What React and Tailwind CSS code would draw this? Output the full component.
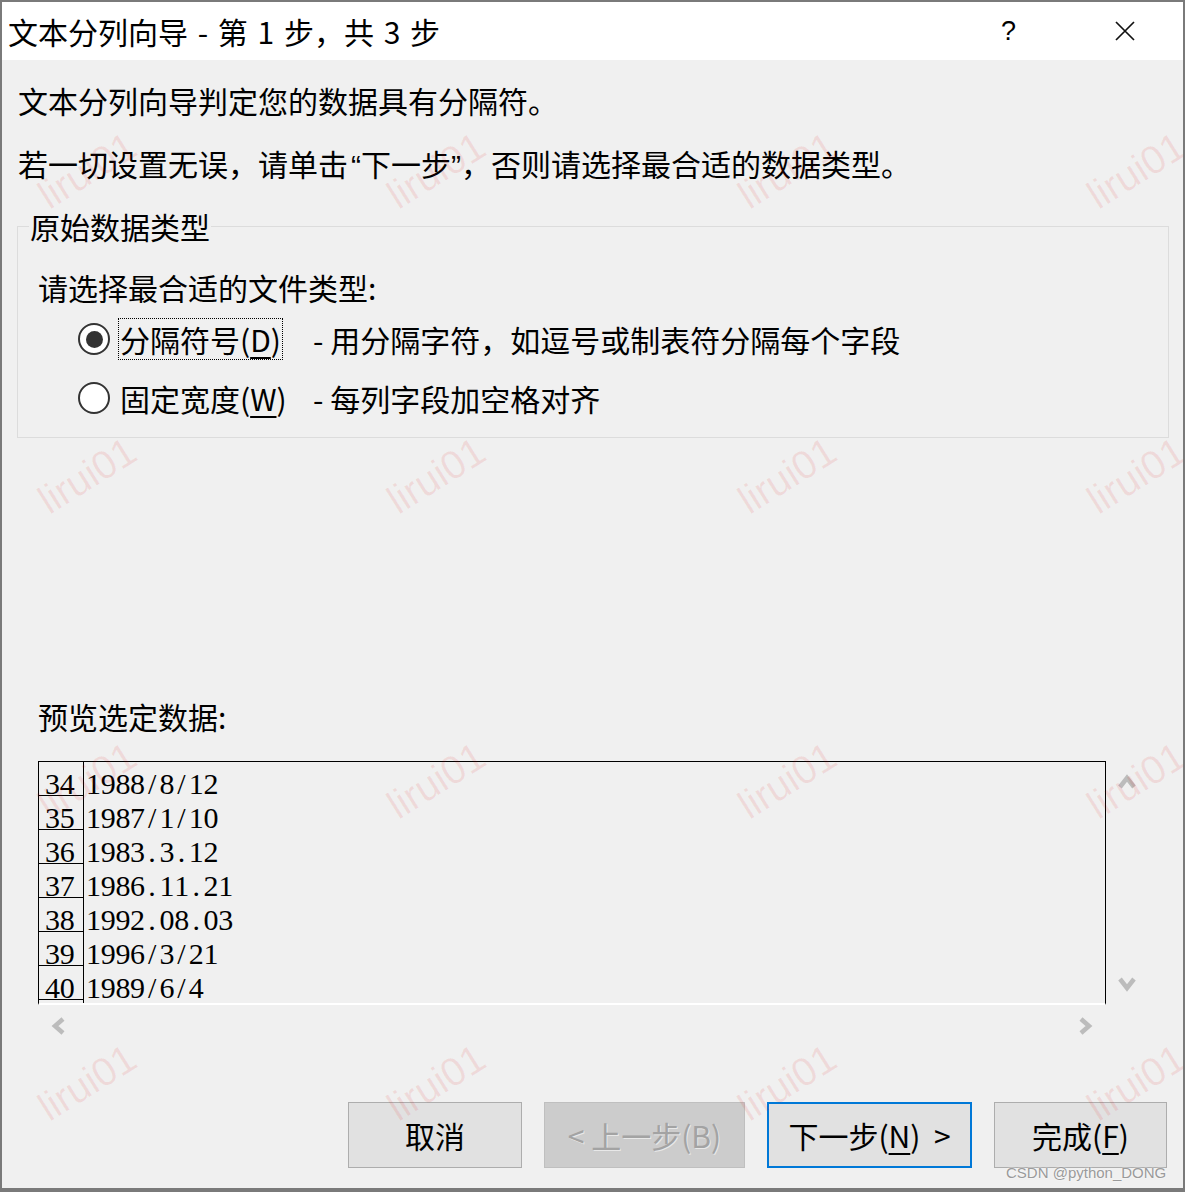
import React from 'react';

const rows = [
  ['34', '1988/8/12'],
  ['35', '1987/1/10'],
  ['36', '1983.3.12'],
  ['37', '1986.11.21'],
  ['38', '1992.08.03'],
  ['39', '1996/3/21'],
  ['40', '1989/6/4'],
  ['41', ''],
];

const marks = [
  'left-[85px] top-[168px]',
  'left-[434px] top-[168px]',
  'left-[785px] top-[168px]',
  'left-[1134px] top-[168px]',
  'left-[85px] top-[473px]',
  'left-[434px] top-[473px]',
  'left-[785px] top-[473px]',
  'left-[1134px] top-[473px]',
  'left-[85px] top-[778px]',
  'left-[434px] top-[778px]',
  'left-[785px] top-[778px]',
  'left-[1134px] top-[778px]',
  'left-[85px] top-[1080px]',
  'left-[434px] top-[1080px]',
  'left-[785px] top-[1080px]',
  'left-[1134px] top-[1080px]',
];

function Mono({ text }) {
  // half-width cells like SimSun
  return (
    <span className="inline-flex">
      {text.split('').map((c, i) => (
        <span key={i} className="inline-block w-[14.7px] text-center">
          {c}
        </span>
      ))}
    </span>
  );
}

function Chevron({ dir }) {
  const pts = {
    up: '2,14 9,5 16,14',
    down: '2,3 9,12 16,3',
    left: '13,2 5,9 13,16',
    right: '3,2 11,9 3,16',
  }[dir];
  const vertical = dir === 'up' || dir === 'down';
  return (
    <svg width={vertical ? 18 : 16} height={vertical ? 16 : 18} viewBox={vertical ? '0 0 18 16' : '0 0 16 18'}>
      <polyline points={pts} fill="none" stroke="#bcbcbc" strokeWidth="4.5" />
    </svg>
  );
}

function Radio({ checked }) {
  return (
    <div className="w-[32px] h-[32px] rounded-full border-[2.5px] border-[#333] bg-white flex items-center justify-center shrink-0">
      {checked && <div className="w-[17px] h-[17px] rounded-full bg-[#333]" />}
    </div>
  );
}

function Key({ children }) {
  return <span className="underline decoration-[2px] underline-offset-[5px]">{children}</span>;
}

export default function App() {
  return (
    <div className="relative w-[1185px] h-[1192px] overflow-hidden border-t-[2px] border-l-[2px] border-r-[2px] border-b-[4px] border-[#7a7a7a] bg-[#f0f0f0] text-black font-['Noto_Sans_CJK_SC',sans-serif]">
      {/* Title bar */}
      <div className="h-[58px] bg-white flex items-center pl-[6px] pr-[48px]">
        <span className="text-[30px] leading-[40px] [word-spacing:3px]">文本分列向导 - 第 1 步，共 3 步</span>
        <span className="ml-auto text-[27px] leading-[40px] font-['Liberation_Sans',sans-serif]">?</span>
        <svg className="ml-[99px]" width="20" height="20" viewBox="0 0 20 20">
          <path d="M1 1 L19 19 M19 1 L1 19" stroke="#111" strokeWidth="1.7" />
        </svg>
      </div>

      {/* Body */}
      <div className="flex flex-col text-[30px]">
        <div className="mt-[20px] h-[40px] leading-[40px] pl-[16px]">文本分列向导判定您的数据具有分隔符。</div>
        <div className="mt-[23px] h-[40px] leading-[40px] pl-[16px]">
          若一切设置无误，请单击<span className="ml-[3px] font-['Liberation_Sans',sans-serif]">“</span>下一步<span className="font-['Liberation_Sans',sans-serif]">”</span>，否则请选择最合适的数据类型。
        </div>

        <fieldset className="mt-[23px] ml-[15px] w-[1152px] border border-[#dcdcdc] pb-[17px]">
          <legend className="ml-[11px] px-[1px] h-[40px] leading-[40px]">原始数据类型</legend>
          <div className="mt-[21px] h-[40px] leading-[40px] pl-[20px]">请选择最合适的文件类型:</div>
          <div className="mt-[10px] h-[44px] flex items-center pl-[60px]">
            <Radio checked />
            <div className="w-[203px] pl-[8px]">
              <span className="inline-block border border-dotted border-black px-[1px] h-[42px] leading-[40px]">
                分隔符号(<Key>D</Key>)
              </span>
            </div>
            <span className="leading-[40px]">- 用分隔字符，如逗号或制表符分隔每个字段</span>
          </div>
          <div className="mt-[15px] h-[44px] flex items-center pl-[60px]">
            <Radio />
            <div className="w-[203px] pl-[10px] leading-[40px]">
              固定宽度(<Key>W</Key>)
            </div>
            <span className="leading-[40px]">- 每列字段加空格对齐</span>
          </div>
        </fieldset>

        <div className="mt-[258px] h-[40px] leading-[40px] pl-[36px]">预览选定数据:</div>

        {/* Preview */}
        <div className="mt-[25px] ml-[36px] flex">
          <div className="w-[1068px] h-[244px] border-l border-t border-r border-black border-b-2 border-b-white overflow-hidden font-['Liberation_Serif',serif] text-[30px]">
            {rows.map(([n, v]) => (
              <div key={n} className="flex h-[34px]">
                <div className="w-[45px] h-[34px] border-r border-b border-black pl-[6px] pt-[7px] leading-[30px]">
                  {v ? <Mono text={n} /> : null}
                </div>
                <div className="pl-[2px] pt-[7px] leading-[30px]">
                  <Mono text={v} />
                </div>
              </div>
            ))}
          </div>
          <div className="w-[42px] h-[244px] flex flex-col items-center justify-between pt-[12px] pb-[13px]">
            <Chevron dir="up" />
            <Chevron dir="down" />
          </div>
        </div>
        <div className="ml-[36px] w-[1068px] h-[40px] flex justify-between px-[12px] pt-[12px]">
          <Chevron dir="left" />
          <Chevron dir="right" />
        </div>

        {/* Buttons */}
        <div className="mt-[57px] ml-[346px] flex gap-[22px] text-[30px]">
          <button className="w-[174px] h-[66px] bg-[#e1e1e1] border border-[#adadad] flex items-center justify-center">
            取消
          </button>
          <button className="w-[201px] h-[66px] bg-[#cccccc] border border-[#bfbfbf] text-[#a3a3a3] [text-shadow:1px_1px_0_#e8e8e8] flex items-center justify-center">
            &lt; 上一步(B)
          </button>
          <button className="w-[205px] h-[66px] bg-[#e1e1e1] border-2 border-[#0078d7] flex items-center justify-center">
            下一步(<Key>N</Key>)&nbsp; &gt;
          </button>
          <button className="w-[173px] h-[66px] bg-[#e1e1e1] border border-[#adadad] flex items-center justify-center">
            完成(<Key>F</Key>)
          </button>
        </div>
      </div>

      {/* Watermarks */}
      {marks.map((m) => (
        <span
          key={m}
          className={`pointer-events-none absolute ${m} -translate-x-1/2 -translate-y-1/2 -rotate-[32deg] whitespace-nowrap text-[40px] font-['Liberation_Sans',sans-serif] text-[rgba(225,0,0,0.09)]`}
        >
          lirui01
        </span>
      ))}
      <span className="pointer-events-none absolute left-[1004px] top-[1162px] whitespace-nowrap text-[15px] leading-[18px] font-['Liberation_Sans',sans-serif] text-[#9a9a9a] [text-shadow:0_0_2px_#fff]">
        CSDN @python_DONG
      </span>
    </div>
  );
}
